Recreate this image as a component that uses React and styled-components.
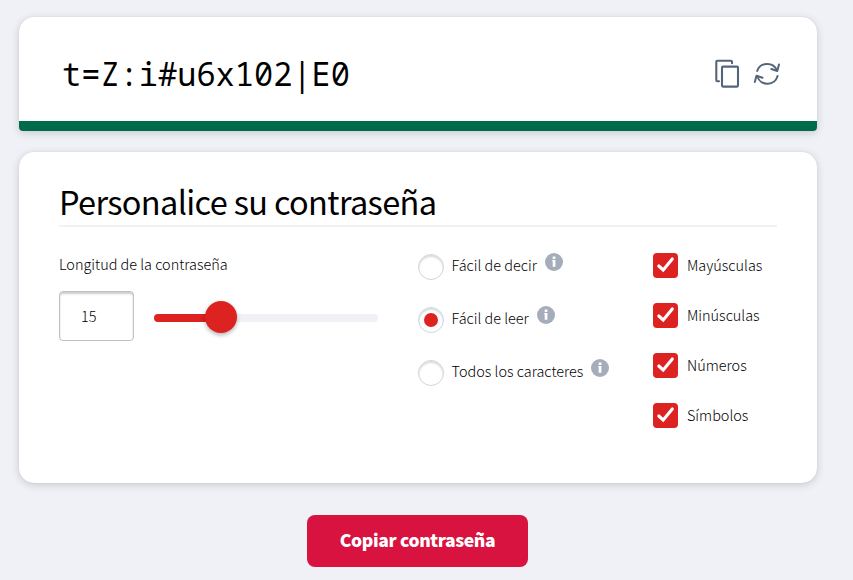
import React from "react";
import styled, { createGlobalStyle } from "styled-components";

const GlobalStyle = createGlobalStyle`
  * { box-sizing: border-box; }
  body {
    margin: 0;
    background: #f0f1f6;
    color: #000;
    font-family: "Source Sans Pro", "Noto Sans CJK SC", "Open Sans", sans-serif;
  }
`;

const Page = styled.main`
  width: 853px;
  height: 580px;
  padding: 17px 36px 0 19px;
  display: flex;
  flex-direction: column;
  overflow: hidden;
`;

const Card = styled.section`
  background: #fff;
  border-radius: 15px;
  box-shadow: 0 2px 8px rgba(0, 0, 0, 0.16), 0 0 1px rgba(0, 0, 0, 0.16);
`;

const PasswordCard = styled(Card)`
  height: 114px;
  flex: none;
  display: flex;
  flex-direction: column;
  overflow: hidden;
  border-radius: 15px 15px 4px 4px;
`;

const PasswordRow = styled.div`
  height: 104px;
  display: flex;
  align-items: center;
  padding: 10px 36px 0 43px;
`;

const Strength = styled.div`
  height: 10px;
  background: #006b4b;
`;

const Password = styled.output`
  flex: 1;
  font: 32px/48px "Noto Sans Mono", "DejaVu Sans Mono", monospace;
  white-space: pre;
`;

const IconButton = styled.button`
  display: flex;
  border: 0;
  padding: 0;
  margin-left: 12px;
  background: none;
  color: #54657a;
`;

const Settings = styled(Card)`
  height: 331px;
  flex: none;
  margin-top: 21px;
  padding: 24px 40px 0;
`;

const Title = styled.h1`
  margin: 0;
  height: 51px;
  border-bottom: 2px solid #f0f0f6;
  font-size: 32.5px;
  line-height: 50px;
  font-weight: 400;
  letter-spacing: -0.65px;
  white-space: nowrap;
`;

const Columns = styled.div`
  display: grid;
  grid-template-columns: 359px 235px 1fr;
`;

const Label = styled.div`
  font-size: 14.45px;
  line-height: 20px;
  font-weight: 300;
  white-space: nowrap;
`;

const LengthColumn = styled.div`
  padding-top: 27px;
`;

const LengthRow = styled.div`
  display: flex;
  align-items: center;
  gap: 20px;
  margin-top: 17px;
`;

const NumberInput = styled.input`
  width: 75px;
  height: 50px;
  padding: 0 0 1px 21px;
  border: 1px solid #c2c2c2;
  border-radius: 4px;
  box-shadow: inset 0 2px 2px rgba(0, 0, 0, 0.2);
  font: 300 14.4px "Source Sans Pro", "Noto Sans CJK SC", sans-serif;
  color: #000;
`;

const Track = styled.div`
  width: 224px;
  height: 8px;
  margin-top: 3px;
  display: flex;
  align-items: center;
  border-radius: 4px;
  background: linear-gradient(90deg, #dd2222 67px, #f0f1f6 67px);
`;

const Thumb = styled.div`
  width: 32px;
  height: 32px;
  margin: -2px 0 0 51px;
  flex: none;
  border-radius: 50%;
  background: #dd2222;
  box-shadow: 0 2px 4px rgba(0, 0, 0, 0.3);
`;

const Radios = styled.div`
  padding-top: 27px;
`;

const RadioRow = styled.label`
  height: 53px;
  display: flex;
  align-items: flex-start;
`;

const Radio = styled.span`
  width: 26px;
  height: 26px;
  margin-right: 7.5px;
  display: grid;
  place-items: center;
  border: 1px solid #cdd6df;
  border-radius: 50%;
  box-shadow: inset 0 2px 2px rgba(0, 0, 0, 0.14);
  &::after {
    content: "";
    width: 14px;
    height: 14px;
    border-radius: 50%;
    background: ${(p) => (p.$checked ? "#dd2222" : "transparent")};
  }
`;

const RadioLabel = styled(Label)`
  margin-top: 1px;
  margin-right: 8.5px;
  width: ${(p) => p.$width}px;
`;

const InfoIcon = styled.svg`
  width: 18px;
  height: 18px;
  margin-top: -1px;
`;

const Checks = styled.div`
  padding-top: 26px;
`;

const CheckRow = styled.label`
  height: 50px;
  display: flex;
  align-items: flex-start;
  gap: 9px;
`;

const CheckText = styled(Label)`
  margin-top: 2px;
`;

const Box = styled.span`
  width: 25px;
  height: 25px;
  display: flex;
  border-radius: 4px;
  background: #dd2222;
`;

const CopyButton = styled.button`
  width: 221px;
  height: 52px;
  flex: none;
  align-self: center;
  margin: 32px 1px 0 0;
  padding: 0 0 2px;
  border: 0;
  border-radius: 8px;
  background: #d8133f;
  color: #fff;
  font: 900 17.5px/50px "Source Sans Pro", "Noto Sans CJK SC", sans-serif;
  letter-spacing: -0.36px;
`;

const radios = [
  { text: "Fácil de decir", width: 85 },
  { text: "Fácil de leer", width: 77, checked: true },
  { text: "Todos los caracteres", width: 131 },
];

const checks = ["Mayúsculas", "Minúsculas", "Números", "Símbolos"];

export default function App() {
  return (
    <>
      <GlobalStyle />
      <Page>
        <PasswordCard>
          <PasswordRow>
            <Password>t=Z:i#u6x102|E0</Password>
            <IconButton aria-label="Copiar">
              <svg width="28" height="30" viewBox="0 0 28 30" fill="none" stroke="currentColor" strokeWidth="2.1" strokeLinejoin="round" strokeLinecap="round">
                <path d="M6 22.200H4.300A1 1 0 0 1 3.300 21.200V2.700A1 1 0 0 1 4.300 1.700H18A1 1 0 0 1 19 2.700V4.200" />
                <rect x="9" y="7.600" width="16" height="20" rx="1" />
              </svg>
            </IconButton>
            <IconButton aria-label="Generar">
              <svg width="28" height="28" viewBox="0 0 28 28" fill="none" stroke="currentColor" strokeWidth="2" strokeLinejoin="round" strokeLinecap="round">
                <path d="M4.200 11A10.600 10.600 0 0 1 24 10.500M24.600 16A10.600 10.600 0 0 1 4.500 17" />
                <path d="M26 4.500L24.300 11L18.300 9M1.800 22L3.500 15.800L9.500 17.800" />
              </svg>
            </IconButton>
          </PasswordRow>
          <Strength />
        </PasswordCard>
        <Settings>
          <Title>Personalice su contraseña</Title>
          <Columns>
            <LengthColumn>
              <Label>Longitud de la contraseña</Label>
              <LengthRow>
                <NumberInput defaultValue="15" aria-label="Longitud" />
                <Track><Thumb /></Track>
              </LengthRow>
            </LengthColumn>
            <Radios>
              {radios.map((r) => (
                <RadioRow key={r.text}>
                  <Radio $checked={r.checked} />
                  <RadioLabel as="span" $width={r.width}>{r.text}</RadioLabel>
                  <InfoIcon viewBox="0 0 18 18">
                    <circle cx="9" cy="9" r="9" fill="#a5adba" />
                    <path d="M7.200 7H10.400V13.800H7.700V8.200H7.200ZM7.700 3.500H10.400V6H7.700Z" fill="#fff" />
                  </InfoIcon>
                </RadioRow>
              ))}
            </Radios>
            <Checks>
              {checks.map((text) => (
                <CheckRow key={text}>
                  <Box>
                    <svg width="25" height="25" viewBox="0 0 25 25" fill="none" stroke="#fff" strokeWidth="3.1" strokeLinecap="round">
                      <path d="M5.800 13L10.200 17L19.300 6" />
                    </svg>
                  </Box>
                  <CheckText as="span">{text}</CheckText>
                </CheckRow>
              ))}
            </Checks>
          </Columns>
        </Settings>
        <CopyButton>Copiar contraseña</CopyButton>
      </Page>
    </>
  );
}
